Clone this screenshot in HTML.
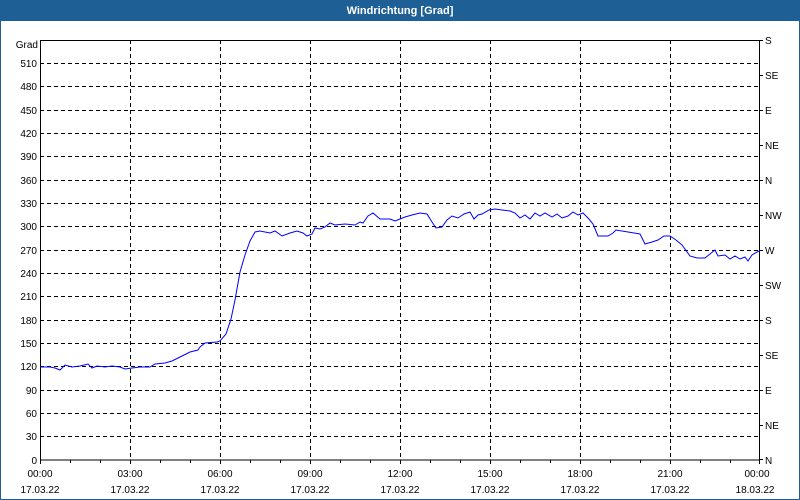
<!DOCTYPE html>
<html><head><meta charset="utf-8"><style>
html,body{margin:0;padding:0;background:#fff;}
svg{display:block;font-family:"Liberation Sans",sans-serif;}
</style></head><body>
<svg width="800" height="500" viewBox="0 0 800 500" xmlns="http://www.w3.org/2000/svg">
<rect x="0" y="0" width="800" height="500" fill="#fff"/>
<rect x="0" y="0" width="800" height="21" fill="#1e5f96"/>
<rect x="0.5" y="0.5" width="799" height="499" fill="none" stroke="#1e5f96"/>
<text x="400" y="14" fill="#fff" font-size="11" font-weight="bold" text-anchor="middle">Windrichtung [Grad]</text>
<g stroke="#000" stroke-width="1" stroke-dasharray="4,3" fill="none">
<path d="M40 63.5H760M40 86.5H760M40 110.5H760M40 133.5H760M40 156.5H760M40 180.5H760M40 203.5H760M40 226.5H760M40 250.5H760M40 273.5H760M40 296.5H760M40 320.5H760M40 343.5H760M40 366.5H760M40 390.5H760M40 413.5H760M40 436.5H760"/>
<path d="M130.5 40V460M220.5 40V460M310.5 40V460M400.5 40V460M490.5 40V460M580.5 40V460M670.5 40V460"/>
</g>
<rect x="40.5" y="40.5" width="719" height="419.5" fill="none" stroke="#000"/>
<g stroke="#000"><path d="M40.5 460v4M70.5 460v3M100.5 460v3M130.5 460v4M160.5 460v3M190.5 460v3M220.5 460v4M250.5 460v3M280.5 460v3M310.5 460v4M340.5 460v3M370.5 460v3M400.5 460v4M430.5 460v3M460.5 460v3M490.5 460v4M520.5 460v3M550.5 460v3M580.5 460v4M610.5 460v3M640.5 460v3M670.5 460v4M700.5 460v3M730.5 460v3M759.5 460v4"/>
<path d="M760 40.5h3M760 75.5h3M760 110.5h3M760 145.5h3M760 180.5h3M760 215.5h3M760 250.5h3M760 285.5h3M760 320.5h3M760 355.5h3M760 390.5h3M760 425.5h3M760 459.5h3"/></g>
<g font-size="10" fill="#000" text-anchor="end">
<text x="38" y="48">Grad</text>
<text x="37" y="67">510</text><text x="37" y="90">480</text><text x="37" y="114">450</text><text x="37" y="137">420</text><text x="37" y="160">390</text><text x="37" y="184">360</text><text x="37" y="207">330</text><text x="37" y="230">300</text><text x="37" y="254">270</text><text x="37" y="277">240</text><text x="37" y="300">210</text><text x="37" y="324">180</text><text x="37" y="347">150</text><text x="37" y="370">120</text><text x="37" y="394">90</text><text x="37" y="417">60</text><text x="37" y="440">30</text><text x="37" y="464">0</text>
</g>
<g font-size="10" fill="#000">
<text x="765" y="44">S</text><text x="765" y="79">SE</text><text x="765" y="114">E</text><text x="765" y="149">NE</text><text x="765" y="184">N</text><text x="765" y="219">NW</text><text x="765" y="254">W</text><text x="765" y="289">SW</text><text x="765" y="324">S</text><text x="765" y="359">SE</text><text x="765" y="394">E</text><text x="765" y="429">NE</text><text x="765" y="464">N</text>
</g>
<g font-size="10" fill="#000" text-anchor="middle">
<text x="40" y="477">00:00</text><text x="130" y="477">03:00</text><text x="220" y="477">06:00</text><text x="310" y="477">09:00</text><text x="400" y="477">12:00</text><text x="490" y="477">15:00</text><text x="580" y="477">18:00</text><text x="670" y="477">21:00</text><text x="757" y="477">00:00</text>
<text x="40" y="493">17.03.22</text><text x="130" y="493">17.03.22</text><text x="220" y="493">17.03.22</text><text x="310" y="493">17.03.22</text><text x="400" y="493">17.03.22</text><text x="490" y="493">17.03.22</text><text x="580" y="493">17.03.22</text><text x="670" y="493">17.03.22</text><text x="755" y="493">18.03.22</text>
</g>
<polyline fill="none" stroke="#0000ff" stroke-width="1" points="40,367 50,367 55,368 60,370 65,365 72,367 80,366 88,364 92,368 97,366 105,367 112,366 120,367 125,369 132,368 140,367 150,367 155,364 165,363 172,361 180,357 190,352 198,350 200,347 205,343 217,342 220,341 226,334 231,319 235,300 240,272 245,255 250,241 255,232 260,231 270,233 275,231 282,236 290,233 297,231 303,233 307,236 312,234 315,228 320,229 325,227 330,223 335,225 345,224 355,225 360,222 363,223 368,216 373,213 380,219 390,219 395,221 400,219 405,217 412,215 420,213 427,214 432,222 436,228 442,227 447,220 452,216 458,218 464,214 470,212 474,219 478,215 482,214 489,210 495,209 502,210 510,211 515,213 520,218 525,215 530,219 535,213 540,216 545,213 552,217 557,214 562,218 568,216 573,212 578,215 583,213 588,218 593,224 598,236 608,236 613,233 616,230 628,232 634,233 640,234 645,244 652,242 658,240 664,236 670,236 676,240 682,245 690,256 697,258 705,258 710,254 715,250 718,256 725,255 730,259 735,256 740,259 745,257 748,261 752,255 757,252 760,251"/>
</svg>
</body></html>
